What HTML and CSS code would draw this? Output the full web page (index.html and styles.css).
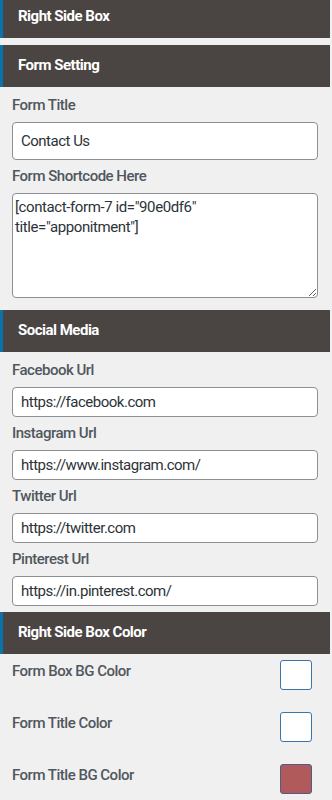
FILE: index.html
```html
<!DOCTYPE html>
<html lang="en">
<head>
<meta charset="utf-8">
<title>Right Side Box</title>
<link rel="stylesheet" href="styles.css">
</head>
<body>
<div class="panel">
  <div class="hd hd-first">Right Side Box</div>

  <div class="hd">Form Setting</div>
  <div class="sec sec-form">
    <label class="lbl">Form Title</label>
    <input class="inp inp-lg" type="text" value="Contact Us">
    <label class="lbl">Form Shortcode Here</label>
    <textarea class="ta">[contact-form-7 id="90e0df6" title="apponitment"]</textarea>
  </div>

  <div class="hd">Social Media</div>
  <div class="sec sec-social">
    <label class="lbl">Facebook Url</label>
    <input class="inp" type="text" value="https://facebook.com">
    <label class="lbl">Instagram Url</label>
    <input class="inp" type="text" value="https://www.instagram.com/">
    <label class="lbl">Twitter Url</label>
    <input class="inp" type="text" value="https://twitter.com">
    <label class="lbl">Pinterest Url</label>
    <input class="inp" type="text" value="https://in.pinterest.com/">
  </div>

  <div class="hd">Right Side Box Color</div>
  <div class="sec sec-color">
    <div class="crow">
      <span class="clbl">Form Box BG Color</span>
      <span class="sw sw-white"></span>
    </div>
    <div class="crow">
      <span class="clbl">Form Title Color</span>
      <span class="sw sw-white"></span>
    </div>
    <div class="crow">
      <span class="clbl">Form Title BG Color</span>
      <span class="sw sw-red"></span>
    </div>
  </div>
</div>
</body>
</html>
```

FILE: styles.css
```css
html, body {
  margin: 0;
  padding: 0;
  background: #f0f0f1;
}
body {
  font-family: Roboto, "Liberation Sans", Arial, sans-serif;
  overflow: hidden;
}
.panel {
  width: 330px;
  margin-top: -4px;
}
.hd {
  box-sizing: border-box;
  height: 42px;
  padding: 10px 15px 12px 15px;
  border-left: 3px solid #0a73aa;
  background: #4a4543;
  color: #ffffff;
  font-size: 15px;
  font-weight: 700;
  line-height: 20px;
  letter-spacing: -0.5px;
}
.hd-first {
  margin-bottom: 7px;
}
.sec {
  display: flex;
  flex-direction: column;
  padding: 0 12px;
}
.sec-form {
  padding-top: 8px;
  padding-bottom: 12px;
}
.sec-social {
  padding-top: 8px;
  padding-bottom: 0;
}
.lbl {
  display: block;
  font-size: 15px;
  font-weight: 500;
  line-height: 20px;
  letter-spacing: -0.5px;
  color: #50575e;
  margin-bottom: 7px;
}
.inp {
  display: block;
  box-sizing: border-box;
  width: 306px;
  height: 30px;
  margin: 0 0 6px 0;
  padding: 0 8px;
  border: 1px solid #8c8f94;
  border-radius: 4px;
  background: #ffffff;
  color: #2c3338;
  font-family: Roboto, "Liberation Sans", Arial, sans-serif;
  font-size: 15px;
  letter-spacing: -0.5px;
  outline: none;
}
.inp-lg {
  height: 38px;
}
.ta {
  display: block;
  box-sizing: border-box;
  width: 306px;
  height: 105px;
  margin: 0;
  padding: 3px 2px;
  border: 1px solid #8c8f94;
  border-radius: 4px;
  background: #ffffff;
  color: #2c3338;
  font-family: Roboto, "Liberation Sans", Arial, sans-serif;
  font-size: 15px;
  line-height: 20px;
  letter-spacing: -0.4px;
  outline: none;
  resize: vertical;
  overflow: hidden;
}
.sec-color {
  padding-top: 6px;
  padding-right: 18px;
  gap: 22px;
}
.crow {
  display: flex;
  justify-content: space-between;
  align-items: flex-start;
  height: 30px;
}
.clbl {
  margin-top: 1px;
  font-size: 15px;
  font-weight: 500;
  line-height: 20px;
  letter-spacing: -0.5px;
  color: #50575e;
}
.sw {
  box-sizing: border-box;
  width: 32px;
  height: 30px;
  border: 1px solid #3a75ab;
  border-radius: 3px;
}
.sw-white {
  background: #ffffff;
}
.sw-red {
  background: #b05a5b;
  border-color: #535a8c;
}
```
